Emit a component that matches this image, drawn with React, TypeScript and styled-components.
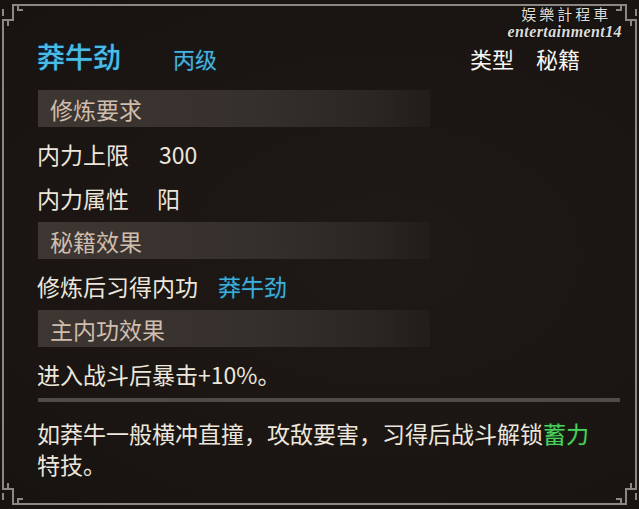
import React from "react";
import styled, { createGlobalStyle } from "styled-components";

const GlobalStyle = createGlobalStyle`
  html, body {
    margin: 0;
    padding: 0;
    background: #1b1613;
  }
`;

const CJK = `"Noto Sans CJK SC", "Noto Sans", sans-serif`;

const Screen = styled.div`
  position: relative;
  width: 639px;
  height: 509px;
  overflow: hidden;
  background: radial-gradient(ellipse at 60% 50%, #1e1915 0%, #1a1512 70%, #171310 100%);
  font-family: ${CJK};
  color: #ece6dc;
`;

const Frame = styled.svg`
  position: absolute;
  inset: 0;
  pointer-events: none;
`;

const Watermark = styled.div`
  position: absolute;
  top: 6px;
  right: 17px;
  display: flex;
  flex-direction: column;
  align-items: center;
  line-height: 1;
  color: #dcdcdc;
  text-shadow: 0 0 2px #000;
`;

const WaterCn = styled.span`
  font-family: "Noto Sans CJK TC", serif;
  font-size: 15px;
  letter-spacing: 3px;
  margin-right: -3px;
`;

const WaterEn = styled.span`
  font-family: "Liberation Serif", serif;
  font-style: italic;
  font-weight: bold;
  font-size: 16px;
  letter-spacing: 0.4px;
  margin-top: 3px;
`;

const Panel = styled.div`
  display: flex;
  flex-direction: column;
  padding: 36px 19px 0 37px;
`;

const TitleRow = styled.div`
  display: flex;
  align-items: baseline;
  height: 40px;
  margin-bottom: 12px;
`;

const Title = styled.span`
  font-size: 28px;
  font-weight: 500;
  line-height: 40px;
  color: #4cbbe4;
  text-shadow: 0 0 2px #0b3c62, 0 0 1px #0b3c62;
`;

const Grade = styled.span`
  font-size: 22px;
  color: #49b2dc;
  margin-left: 52px;
  text-shadow: 0 0 2px #0b3c62;
`;

const TypeBox = styled.span`
  margin-left: auto;
  margin-right: 40px;
  font-size: 22px;
  color: #f8f6f1;
  display: flex;
  gap: 22px;
`;

const SectionBar = styled.div`
  width: 380px;
  height: 37px;
  margin: 2px 0 5px 1px;
  padding-left: 12px;
  display: flex;
  align-items: center;
  font-size: 23px;
  color: #cfbdad;
  background: linear-gradient(to right, #3d3632 0%, #36302c 55%, #2c2623 85%, #231d1a 100%);
`;

const Row = styled.div<{ $gap?: number }>`
  height: 44px;
  display: flex;
  align-items: center;
  gap: ${(p) => p.$gap ?? 28}px;
  font-size: 23px;
`;

const Hl = styled.span<{ $tone: "blue" | "green" }>`
  color: ${(p) => (p.$tone === "blue" ? "#3faed6" : "#4ccf5e")};
  text-shadow: ${(p) => (p.$tone === "blue" ? "0 0 2px #0b3c62" : "0 0 2px #0c4a16")};
`;

const Divider = styled.div`
  height: 4px;
  margin: 2px 0 0 1px;
  width: 582px;
  background: #4f4b47;
`;

const Desc = styled.p`
  margin: 16px 0 0 0;
  width: 560px;
  font-size: 23px;
  line-height: 31px;
`;

const corner = "M3 28 V20 H13 V5 H28";

const App: React.FC = () => {
  return (
    <Screen>
      <GlobalStyle />
      <Panel>
        <TitleRow>
          <Title>莽牛劲</Title>
          <Grade>丙级</Grade>
          <TypeBox>
            <span>类型</span>
            <span>秘籍</span>
          </TypeBox>
        </TitleRow>

        <SectionBar>修炼要求</SectionBar>
        <Row $gap={30}>
          <span>内力上限</span>
          <span>300</span>
        </Row>
        <Row>
          <span>内力属性</span>
          <span>阳</span>
        </Row>

        <SectionBar>秘籍效果</SectionBar>
        <Row $gap={20}>
          <span>修炼后习得内功</span>
          <Hl $tone="blue">莽牛劲</Hl>
        </Row>

        <SectionBar>主内功效果</SectionBar>
        <Row>
          <span>进入战斗后暴击+10%。</span>
        </Row>

        <Divider />
        <Desc>
          如莽牛一般横冲直撞，攻敌要害，习得后战斗解锁<Hl $tone="green">蓄力</Hl>特技。
        </Desc>
      </Panel>

      <Watermark>
        <WaterCn>娱樂計程車</WaterCn>
        <WaterEn>entertainment14</WaterEn>
      </Watermark>

      <Frame width="639" height="509" viewBox="0 0 639 509">
        <g stroke="#8b8883" strokeWidth="2" fill="none">
          <path d="M28 5 H611 M28 504 H611 M3 28 V481 M636 28 V481" />
          {[
            "",
            "translate(639 0) scale(-1 1)",
            "translate(0 509) scale(1 -1)",
            "translate(639 509) scale(-1 -1)",
          ].map((t, i) => (
            <g key={i} transform={t}>
              <path d={corner} />
              <path d="M3 9 V16" />
              <path d="M8 20 V26 M18 5 V10 H23" />
            </g>
          ))}
        </g>
      </Frame>
    </Screen>
  );
};

export default App;
